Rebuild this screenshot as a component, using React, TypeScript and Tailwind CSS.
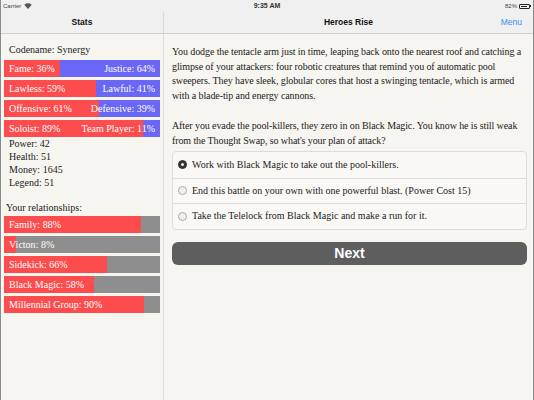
import { useState } from "react";

const alignment = [
  { left: "Fame", lv: 36, right: "Justice", rv: 64 },
  { left: "Lawless", lv: 59, right: "Lawful", rv: 41 },
  { left: "Offensive", lv: 61, right: "Defensive", rv: 39 },
  { left: "Soloist", lv: 89, right: "Team Player", rv: 11 },
];

const stats = [
  ["Power", 42],
  ["Health", 51],
  ["Money", 1645],
  ["Legend", 51],
] as const;

const relationships = [
  ["Family", 88],
  ["Victon", 8],
  ["Sidekick", 66],
  ["Black Magic", 58],
  ["Millennial Group", 90],
] as const;

const choices = [
  "Work with Black Magic to take out the pool-killers.",
  "End this battle on your own with one powerful blast. (Power Cost 15)",
  "Take the Telelock from Black Magic and make a run for it.",
];

const serif = "font-['Liberation_Serif',serif]";
const sans = "font-['Liberation_Sans',Arial,sans-serif]";

function Wifi() {
  return (
    <svg width="8" height="6" viewBox="0 0 16 12" className="ml-[3px]">
      <path d="M8 12 L0.5 3.5 A11 11 0 0 1 15.5 3.5 Z" fill="#555" />
    </svg>
  );
}

export default function App() {
  const [picked, setPicked] = useState(0);

  return (
    <div className={`flex h-[400px] w-[534px] flex-col overflow-hidden border-x border-[#8c8c8c] bg-[#f7f5f0] ${serif}`}>
      <div className="flex flex-col border-b border-[#cfcfcf] bg-[#f0f0f0]">
        <div className={`relative flex h-[12px] items-center justify-between px-[2px] text-[6px] text-[#444] ${sans}`}>
          <span className="flex items-center">
            Carrier
            <Wifi />
          </span>
          <span className="absolute left-1/2 -translate-x-1/2 text-[7px] font-semibold text-[#333]">9:35 AM</span>
          <span className="flex items-center gap-[2px]">
            82%
            <span className="flex items-center">
              <span className="block h-[5px] w-[11px] rounded-[1px] border border-[#222] p-[1px]">
                <span className="block h-full w-[80%] bg-[#222]" />
              </span>
              <span className="block h-[2px] w-[1px] bg-[#222]" />
            </span>
          </span>
        </div>
        <div className={`flex h-[21px] items-center text-[8.5px] font-bold text-[#111] ${sans}`}>
          <div className="w-[163px] shrink-0 border-r border-[#d8d8d8] text-center leading-[21px]">Stats</div>
          <div className="relative flex-1 text-center leading-[21px]">
            Heroes Rise
            <span className="absolute right-[11px] top-0 font-normal text-[#3b8ef0]">Menu</span>
          </div>
        </div>
      </div>

      <div className="flex flex-1">
        <aside className="w-[163px] shrink-0 border-r border-[#dcdcdc] px-[3px] pt-[9px] text-[10px] text-[#222]">
          <div className="pl-[5px] leading-[14px]">Codename: Synergy</div>
          <div className="mt-[3px] flex flex-col gap-[3px]">
            {alignment.map((a) => (
              <div key={a.left} className="relative flex h-[17px] overflow-hidden bg-[#6a66f6] text-white">
                <div className="h-full bg-[#fd4c4e]" style={{ width: `${a.lv}%` }} />
                <div className="absolute inset-0 flex items-center justify-between px-[5px] leading-none">
                  <span>{a.left}: {a.lv}%</span>
                  <span>{a.right}: {a.rv}%</span>
                </div>
              </div>
            ))}
          </div>
          <div className="flex flex-col pl-[5px] leading-[13px]">
            {stats.map(([k, v]) => (
              <div key={k}>
                {k}: {v}
              </div>
            ))}
          </div>
          <div className="mt-[12px] pl-[2px] leading-[13px]">Your relationships:</div>
          <div className="mt-[2px] flex flex-col gap-[3px]">
            {relationships.map(([name, v]) => (
              <div key={name} className="relative flex h-[17px] overflow-hidden bg-[#8e8e8e] text-white">
                <div className="h-full bg-[#fd4c4e]" style={{ width: `${v}%` }} />
                <span className="absolute inset-0 flex items-center px-[5px] leading-none">
                  {name}: {v}%
                </span>
              </div>
            ))}
          </div>
        </aside>

        <main className="flex-1 pl-[8px] pr-[6px] pt-[11px] text-[10px] leading-[14.7px] tracking-[-0.1px] text-[#222]">
          <p>
            You dodge the tentacle arm just in time, leaping back onto the nearest roof and catching a glimpse of your
            attackers: four robotic creatures that remind you of automatic pool sweepers. They have sleek, globular
            cores that host a swinging tentacle, which is armed with a blade-tip and energy cannons.
          </p>
          <p className="mt-[15px]">
            After you evade the pool-killers, they zero in on Black Magic. You know he is still weak from the Thought
            Swap, so what's your plan of attack?
          </p>
          <div className="mt-[3px] flex flex-col rounded-[4px] border border-[#dcdcdc] bg-[#f9f8f5] tracking-normal">
            {choices.map((c, i) => (
              <button
                key={c}
                type="button"
                onClick={() => setPicked(i)}
                className={`flex h-[25.5px] items-center gap-[5px] px-[5px] text-left ${i > 0 ? "border-t border-[#dcdcdc]" : ""}`}
              >
                <span
                  className={`flex h-[9px] w-[9px] items-center justify-center rounded-full border ${
                    picked === i ? "border-[#333] bg-[#333]" : "border-[#aaa] bg-[#f0f0f0]"
                  }`}
                >
                  {picked === i ? <span className="block h-[3px] w-[3px] rounded-full bg-[#eee]" /> : null}
                </span>
                <span>{c}</span>
              </button>
            ))}
          </div>
          <button
            type="button"
            className={`mt-[12px] h-[23px] w-full rounded-[6px] bg-[#5e5e5e] text-[14px] font-bold tracking-normal text-white ${sans}`}
          >
            Next
          </button>
        </main>
      </div>
    </div>
  );
}
